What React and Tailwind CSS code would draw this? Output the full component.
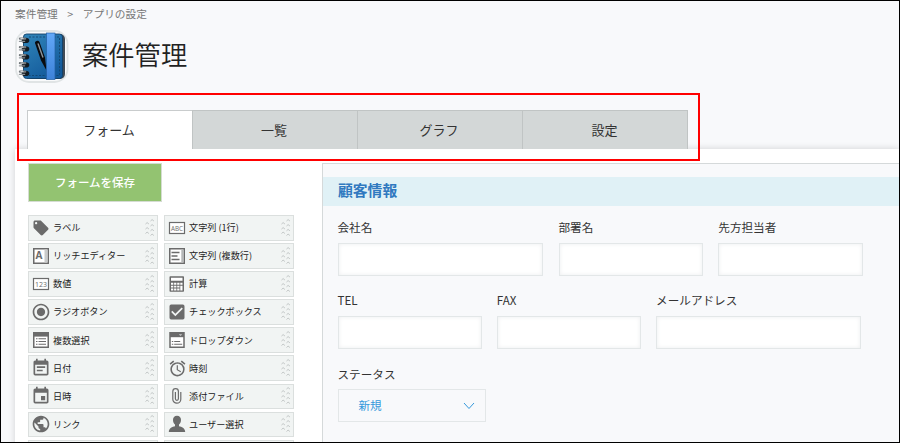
import React from "react";
import {
  MdLocalOffer,
  MdRadioButtonChecked,
  MdCheckBox,
  MdEventNote,
  MdEvent,
  MdPublic,
  MdAlarm,
} from "react-icons/md";

const G = "#6b6b6b";

function Svg({ children }) {
  return (
    <svg width="18" height="18" viewBox="0 0 18 18" fill="none" stroke={G} strokeWidth="1.5" className="overflow-visible">
      {children}
    </svg>
  );
}

const RichIcon = () => (
  <Svg>
    <rect x="1.75" y="1.75" width="14.5" height="14.5" fill="#fff" />
    <path d="M12.5 2.5h3v13h-3z" fill="#c9cbcb" stroke="none" />
    <text x="3.4" y="12.4" fontSize="10" fontWeight="700" fontFamily="Open Sans, sans-serif" fill={G} stroke="none">A</text>
  </Svg>
);

const BoxText = ({ t }) => (
  <Svg>
    <rect x="1.5" y="3.5" width="15" height="11" fill="#fff" strokeWidth="1.2" />
    <text x="9" y="12" textAnchor="middle" fontSize="8" textLength="12" lengthAdjust="spacingAndGlyphs" fontFamily="Open Sans, sans-serif" fill={G} stroke="none">{t}</text>
  </Svg>
);

const MultiLineIcon = () => (
  <Svg>
    <rect x="1.75" y="1.75" width="14.5" height="14.5" fill="#fff" />
    <path d="M13.3 2.5h2.2v13h-2.2z" fill="#b5b7b7" stroke="none" />
    <path d="M3.5 5.5h8M3.5 9h6M3.5 12.5h8" />
  </Svg>
);

const CalcIcon = () => (
  <Svg>
    <rect x="1.5" y="1.2" width="14.5" height="15.6" rx="0.8" fill={G} stroke="none" />
    <path d="M3 2.8h11.5v3H3zM3 7.8h2.3v1.9H3zM6.1 7.8h2.3v1.9H6.1zM9.2 7.8h2.3v1.9H9.2zM12.3 7.8h2.2v1.9h-2.2zM3 10.7h2.3v1.9H3zM6.1 10.7h2.3v1.9H6.1zM9.2 10.7h2.3v1.9H9.2zM3 13.5h2.3v1.9H3zM6.1 13.5h2.3v1.9H6.1zM9.2 13.5h2.3v1.9H9.2zM12.3 10.7h2.2v4.7h-2.2z" fill="#fff" stroke="none" />
  </Svg>
);

const MultiSelectIcon = () => (
  <Svg>
    <rect x="1.75" y="1.75" width="14.5" height="14.5" fill="#fff" />
    <path d="M2 2h14v3.6H2z" fill={G} stroke="none" />
    <path d="M4 7.8h1.5M4 10.5h1.5M4 13.2h1.5M6.5 7.8H14M6.5 10.5H14M6.5 13.2H14" strokeWidth="1.1" />
  </Svg>
);

const DropdownIcon = () => (
  <Svg>
    <rect x="2" y="1.75" width="14" height="14.5" fill="#fff" />
    <path d="M2 2h14v4.2H2z" fill={G} stroke="none" />
    <path d="M10.8 3.2h3.4l-1.700 1.700z" fill="#c9cbcb" stroke="none" />
    <path d="M3.8 10.5h1.5M6.2 10.5h6M3.8 13.2h1.5M6.2 13.2h8" strokeWidth="1.1" />
  </Svg>
);

const ClipIcon = () => (
  <Svg>
    <path
      d="M12.8 5v7.2a4 4 0 0 1-8 0V4.4a2.8 2.8 0 0 1 5.6 0v7.4a1.5 1.5 0 0 1-3 0V5"
      strokeWidth="1.2"
    />
  </Svg>
);

const UserIcon = () => (
  <Svg>
    <path
      d="M9 .8c2.6 0 4 1.7 4 4.2 0 2-.9 3.7-2 4.6v1.7c2.6.7 6 1.5 6.2 5.7H.8c.2-4.2 3.6-5 6.2-5.7V9.6C5.9 8.7 5 7 5 5 5 2.5 6.4.8 9 .8z"
      fill={G}
      stroke="none"
    />
  </Svg>
);

const rows = [
  [[<MdLocalOffer size={18} />, "ラベル"], [<BoxText t="ABC" />, "文字列 (1行)"]],
  [[<RichIcon />, "リッチエディター"], [<MultiLineIcon />, "文字列 (複数行)"]],
  [[<BoxText t="123" />, "数値"], [<CalcIcon />, "計算"]],
  [[<MdRadioButtonChecked size={20} />, "ラジオボタン"], [<MdCheckBox size={20} />, "チェックボックス"]],
  [[<MultiSelectIcon />, "複数選択"], [<DropdownIcon />, "ドロップダウン"]],
  [[<MdEventNote size={20} />, "日付"], [<MdAlarm size={19} />, "時刻"]],
  [[<MdEvent size={20} />, "日時"], [<ClipIcon />, "添付ファイル"]],
  [[<MdPublic size={20} />, "リンク"], [<UserIcon />, "ユーザー選択"]],
  [[null, ""], [null, ""]],
];

const Grip = () => (
  <svg width="10" height="20" viewBox="0 0 10 20" fill="none" stroke="#bcc1c1" strokeWidth="0.9" className="shrink-0">
    {[4.5, 9.5, 14].map((y) => (
      <path key={y} d={`M0.5 ${y + 1.5}q1.5-2.8 3.4 0`} />
    ))}
    {[1.5, 6.5, 11.3, 16].map((y) => (
      <path key={y} d={`M5.5 ${y + 1.5}q1.5-2.8 3.4 0`} />
    ))}
  </svg>
);

function PaletteItem({ icon, label }) {
  return (
    <div className="flex h-[25.5px] w-[130px] items-center border border-[#dbdfde] bg-[#f1f4f3] pr-[2px] pl-[2px]">
      <span className="flex w-[20px] shrink-0 justify-center text-[#6b6b6b]">{icon}</span>
      <span className="ml-[2px] flex-1 whitespace-nowrap text-[9.15px] leading-none text-[#222]">{label}</span>
      <Grip />
    </div>
  );
}

function Field({ label, width }) {
  return (
    <div className={width}>
      <div className="h-[23px] text-[11.6px] leading-[14px] whitespace-nowrap text-[#333]">{label}</div>
      <div className="h-[33px] border border-[#e3e7e8] bg-white shadow-[inset_0_0_4px_#eceeef]" />
    </div>
  );
}

function NotebookIcon() {
  return (
    <svg width="54" height="54" viewBox="0 0 54 54">
      <defs>
        <linearGradient id="cover" x1="0" y1="0" x2="0.6" y2="1">
          <stop offset="0" stopColor="#3186ba" />
          <stop offset="1" stopColor="#135a9b" />
        </linearGradient>
        <linearGradient id="band" x1="0" y1="0" x2="0" y2="1">
          <stop offset="0" stopColor="#62a8f8" />
          <stop offset="1" stopColor="#3d82d8" />
        </linearGradient>
      </defs>
      <rect x="1" y="1" width="51.5" height="51" rx="13" fill="#f9fafb" stroke="#e0e4e5" strokeWidth="1.8" />
      <rect x="12" y="4" width="38" height="45" rx="5" fill="#414b56" />
      <rect x="8.5" y="4" width="39" height="44.5" rx="3" fill="url(#cover)" stroke="#123f66" strokeWidth="0.9" />
      <path d="M14 7h30.5v38.5H14" fill="none" stroke="#12466f" strokeWidth="0.9" strokeDasharray="2 1.5" />
      <path d="M20 13c-.2-2.3 3.4-3.3 4.5-1l5.5 15.5 1.5 13-5.5-10z" fill="#0a0b0e" />
      <path d="M23.2 14l4.6 13" stroke="#8d949a" strokeWidth="1.4" strokeLinecap="round" />
      <rect x="31.5" y="3" width="8.5" height="46.5" fill="url(#band)" stroke="#245fa2" strokeWidth="0.7" />
      {[10, 18.5, 26.5, 34.5, 43].map((y) => (
        <g key={y}>
          <ellipse cx="10.5" cy={y + 0.4} rx="3.800" ry="2.700" fill="#131a20" />
          <rect x="3.8" y={y - 2.4} width="7.5" height="2.2" rx="1.1" fill="#74797d" />
          <path d={`M5.5 ${y - 1.4}h3`} stroke="#e2e4e6" strokeWidth="0.9" />
          <rect x="3.8" y={y + 0.7} width="6.5" height="1.3" rx="0.65" fill="#8d9296" />
        </g>
      ))}
    </svg>
  );
}

export default function App() {
  return (
    <div className="relative flex h-[443px] w-[900px] flex-col overflow-hidden border border-black bg-[#f8f9fb] font-['Noto_Sans_CJK_JP','Open_Sans',sans-serif] text-[#333]">
      <nav className="flex h-[28px] shrink-0 items-center pb-px pl-[14px] text-[10.7px] leading-none text-[#777]">
        <span>案件管理</span>
        <span className="w-[25px] text-center">&gt;</span>
        <span>アプリの設定</span>
      </nav>
      <header className="flex h-[81px] shrink-0 items-start pt-[1px] pl-[14px]">
        <NotebookIcon />
        <h1 className="mt-[11px] ml-[13px] text-[26.3px] leading-[26px] font-[350] text-[#222]">案件管理</h1>
      </header>

      <div className="z-10 flex h-[39px] shrink-0 pl-[26px] text-[13px] leading-none text-[#333]">
        <div className="flex w-[165px] items-center justify-center border-t border-l border-[#c9cccd] bg-white pr-[2px] pb-[2px]">フォーム</div>
        <div className="flex w-[166px] items-center justify-center border-t border-r border-l border-[#c0c4c4] bg-[#d3d7d7] pr-[2px] pb-[2px]">一覧</div>
        <div className="flex w-[165px] items-center justify-center border-t border-r border-[#c0c4c4] bg-[#d3d7d7] pr-[2px] pb-[2px]">グラフ</div>
        <div className="flex w-[165px] items-center justify-center border-t border-r border-[#c0c4c4] bg-[#d3d7d7] pr-px pb-[2px]">設定</div>
      </div>

      <main className="ml-[14px] flex h-[320px] shrink-0 bg-white shadow-[0_0_7px_rgba(0,0,0,0.16)]">
        <aside className="w-[307px] shrink-0 pt-[14px] pl-[13px]">
          <div className="flex h-[39px] w-[134px] items-center justify-center border border-[#d5dcd2] bg-[#93c371] text-[11.5px] font-medium text-white">
            フォームを保存
          </div>
          <div className="mt-[13px] flex flex-col gap-[2.6px]">
            {rows.map((r, i) => (
              <div key={i} className="flex gap-[6px]">
                <PaletteItem icon={r[0][0]} label={r[0][1]} />
                <PaletteItem icon={r[1][0]} label={r[1][1]} />
              </div>
            ))}
          </div>
        </aside>

        <section className="mt-[14px] flex-1 border-t border-l border-[#d5d9da] bg-[#f8f9fb] pt-[13px]">
          <h2 className="flex h-[29px] items-center bg-[#e0f1f6] pb-[2px] pl-[15px] text-[14.8px] leading-none font-bold text-[#3079c0]">顧客情報</h2>
          <div className="flex gap-[15.5px] pt-[14px] pl-[14.5px]">
            <Field label="会社名" width="w-[205.5px]" />
            <Field label="部署名" width="w-[144.3px]" />
            <Field label="先方担当者" width="w-[144.3px]" />
          </div>
          <div className="flex gap-[15px] pt-[17px] pl-[14.5px]">
            <Field label="TEL" width="w-[144.3px]" />
            <Field label="FAX" width="w-[144.3px]" />
            <Field label="メールアドレス" width="w-[205.4px]" />
          </div>
          <div className="pt-[17.6px] pl-[14.5px]">
            <div className="h-[22.8px] text-[11.6px] leading-[14px]">ステータス</div>
            <div className="flex h-[33px] w-[148.4px] items-center justify-between border border-[#e3e7e8] pr-[10px] pl-[20px] text-[11.6px] text-[#3498db]">
              新規
              <svg width="12" height="8" viewBox="0 0 12 8" fill="none" stroke="#3498db" strokeWidth="1">
                <path d="M1 1l5 5.5L11 1" />
              </svg>
            </div>
          </div>
        </section>
      </main>

      <div className="absolute top-[92px] left-[16px] z-20 h-[68px] w-[683px] border-2 border-[#ff0000]" />
    </div>
  );
}
